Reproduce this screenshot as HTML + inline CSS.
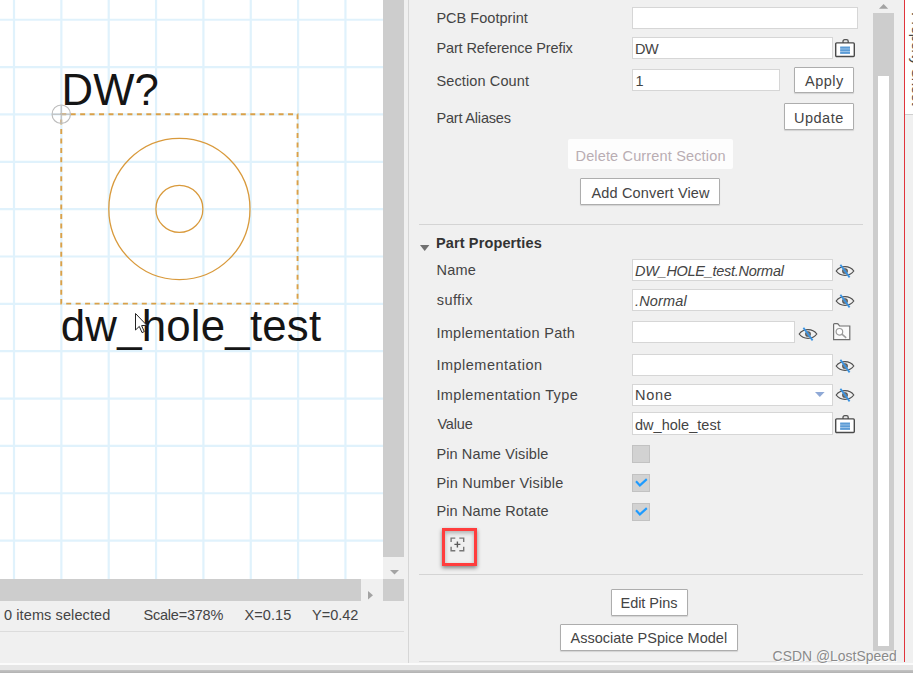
<!DOCTYPE html>
<html><head><meta charset="utf-8"><title>Part Properties</title>
<style>
html,body{margin:0;padding:0;}
body{width:913px;height:673px;overflow:hidden;background:#f0f0f0;position:relative;font-family:"Liberation Sans",Arial,sans-serif;font-size:14.5px;color:#444;}
.abs{position:absolute;}
.t{position:absolute;white-space:nowrap;line-height:20px;font-size:14.5px;color:#444;}
.inp{position:absolute;background:#fff;border:1px solid #d6d6d6;box-sizing:border-box;}
.btn{position:absolute;background:#fff;border:1px solid #adadad;box-sizing:border-box;border-radius:1px;box-shadow:0 1px 1px rgba(0,0,0,.12);}
.cb{position:absolute;background:#d2d2d2;border:1px solid #c2c2c2;box-sizing:border-box;width:18.5px;height:18.5px;}
.hl{position:absolute;height:1px;background:#d4d4d4;}
svg{position:absolute;overflow:visible;}
</style></head><body>
<svg width="0" height="0" style="position:absolute"><symbol id="eye" viewBox="0 0 20 14" overflow="visible">
<path d="M1.2 7 C4 3.2 7.6 2.7 10 2.7 C12.4 2.7 16 3.2 18.8 7 C16 10.8 12.4 11.3 10 11.3 C7.6 11.3 4 10.8 1.2 7 Z" fill="none" stroke="#505050" stroke-width="1.2"/>
<circle cx="10" cy="7" r="2.3" fill="#8a8a8a" stroke="#505050" stroke-width="1.1"/>
<line x1="5.4" y1="0.8" x2="14.6" y2="13.4" stroke="#3a92e0" stroke-width="1.8"/>
</symbol><symbol id="clipb" viewBox="0 0 20 19" overflow="visible">
<rect x="8" y="0.7" width="5.2" height="4.4" rx="1.6" fill="#e8e8e8" stroke="#555" stroke-width="1.3"/>
<rect x="0.7" y="3.9" width="18.6" height="13.6" rx="1" fill="#fff" stroke="#4a4a4a" stroke-width="1.4"/>
<rect x="5.2" y="7.4" width="9.8" height="7.6" fill="#b4d2ee"/>
<rect x="5.2" y="7.7" width="9.8" height="1.9" fill="#5b9bd5"/>
<rect x="5.2" y="10.3" width="9.8" height="1.9" fill="#5b9bd5"/>
<rect x="5.2" y="12.9" width="9.8" height="1.9" fill="#5b9bd5"/>
</symbol></svg>

<!-- canvas -->
<div class="abs" style="left:0;top:0;width:383px;height:579px;background:#fff;overflow:hidden;">
<svg width="383" height="579" viewBox="0 0 383 579" style="left:0;top:0;">
<g stroke="#e0f2fc" stroke-width="2.2">
<line x1="14.00" y1="0" x2="14.00" y2="579"/>
<line x1="61.35" y1="0" x2="61.35" y2="579"/>
<line x1="108.70" y1="0" x2="108.70" y2="579"/>
<line x1="156.05" y1="0" x2="156.05" y2="579"/>
<line x1="203.40" y1="0" x2="203.40" y2="579"/>
<line x1="250.75" y1="0" x2="250.75" y2="579"/>
<line x1="298.10" y1="0" x2="298.10" y2="579"/>
<line x1="345.45" y1="0" x2="345.45" y2="579"/>
<line x1="0" y1="19.75" x2="383" y2="19.75"/>
<line x1="0" y1="67.10" x2="383" y2="67.10"/>
<line x1="0" y1="114.45" x2="383" y2="114.45"/>
<line x1="0" y1="161.80" x2="383" y2="161.80"/>
<line x1="0" y1="209.15" x2="383" y2="209.15"/>
<line x1="0" y1="256.50" x2="383" y2="256.50"/>
<line x1="0" y1="303.85" x2="383" y2="303.85"/>
<line x1="0" y1="351.20" x2="383" y2="351.20"/>
<line x1="0" y1="398.55" x2="383" y2="398.55"/>
<line x1="0" y1="445.90" x2="383" y2="445.90"/>
<line x1="0" y1="493.25" x2="383" y2="493.25"/>
<line x1="0" y1="540.60" x2="383" y2="540.60"/>
</g>
<g fill="none" stroke="#d99a3c" stroke-width="1.3">
<rect x="61.25" y="114.20" width="236.30" height="189.40" stroke-dasharray="5 4.45" stroke="#dba148" stroke-width="1.9"/>
<circle cx="179.40" cy="208.95" r="70.6"/>
<circle cx="179.40" cy="208.95" r="23.5"/>
</g>
<g fill="none" stroke="#bdbdbd" stroke-width="1.2">
<circle cx="61.25" cy="114.20" r="9.2"/>
<line x1="52.25" y1="114.20" x2="70.25" y2="114.20"/>
<line x1="61.25" y1="105.20" x2="61.25" y2="123.20"/>
</g>
<text id="c1" x="61.6" y="104.6" font-family="Liberation Sans, Arial, sans-serif" font-size="43.7" fill="#151515">DW?</text>
<text id="c2" x="60.8" y="340.8" font-family="Liberation Sans, Arial, sans-serif" font-size="43.8" letter-spacing="0.2" fill="#151515">dw_hole_test</text>
<!-- mouse cursor -->
<path d="M135.5 313.5 L135.5 330 L139.3 326.4 L142 332.6 L144.3 331.6 L141.6 325.6 L146.8 325.3 Z" fill="#fff" stroke="#222" stroke-width="1" stroke-linejoin="round"/>
</svg>
</div>

<!-- vertical scrollbar of canvas -->
<div class="abs" style="left:383px;top:0;width:21px;height:557px;background:#cdcdcd;"></div>
<svg width="10" height="6" style="left:389.5px;top:570px;"><path d="M0 0 L9 0 L4.5 4.6 Z" fill="#a3a3a3"/></svg>
<!-- horizontal scrollbar -->
<div class="abs" style="left:0;top:579px;width:361.3px;height:21.5px;background:#cdcdcd;"></div>
<div class="abs" style="left:383px;top:579px;width:21px;height:21.5px;background:#cdcdcd;"></div>
<svg width="6" height="10" style="left:367.8px;top:591.3px;"><path d="M0 0 L5 4.2 L0 8.4 Z" fill="#a3a3a3"/></svg>
<!-- status bar -->
<div class="hl" style="left:0;top:631px;width:404px;background:#dcdcdc;"></div>

<!-- divider -->
<div class="abs" style="left:408px;top:0;width:1px;height:663px;background:#d6d6d6;"></div>

<!-- right panel: inputs -->
<div class="inp" style="left:631.5px;top:6.5px;width:226px;height:22px;"></div>
<div class="inp" style="left:631.5px;top:36.5px;width:201px;height:22px;"></div>
<div class="inp" style="left:631.5px;top:69px;width:148.5px;height:22px;"></div>
<div class="inp" style="left:631.5px;top:259.2px;width:201px;height:22px;"></div>
<div class="inp" style="left:631.5px;top:289px;width:201px;height:22px;"></div>
<div class="inp" style="left:631.5px;top:321.2px;width:163.5px;height:22px;"></div>
<div class="inp" style="left:631.5px;top:354.2px;width:201px;height:22px;"></div>
<div class="inp" style="left:631.5px;top:383.5px;width:201px;height:22px;"></div>
<div class="inp" style="left:631.5px;top:412.3px;width:201px;height:22.5px;"></div>
<svg width="10" height="6" style="left:815px;top:391.7px;"><path d="M0 0 L9.6 0 L4.8 5 Z" fill="#8fa9d6"/></svg>

<!-- buttons -->
<div class="btn" style="left:794.2px;top:66.7px;width:59.6px;height:26.8px;"></div>
<div class="btn" style="left:784.4px;top:103.2px;width:69.4px;height:26.8px;"></div>
<div class="abs" style="left:568px;top:138.8px;width:164.5px;height:30px;background:#fdfdfd;border-radius:2px;"></div>
<div class="btn" style="left:580.4px;top:177.9px;width:139.8px;height:26.8px;"></div>
<div class="btn" style="left:610.6px;top:589.2px;width:77.6px;height:26.5px;"></div>
<div class="btn" style="left:560.4px;top:624.2px;width:177.8px;height:26.5px;"></div>

<!-- separators -->
<div class="hl" style="left:419px;top:224px;width:444px;"></div>
<div class="hl" style="left:419px;top:574px;width:444px;"></div>
<div class="hl" style="left:419px;top:661.3px;width:444px;background:#dcdcdc;"></div>

<!-- section arrow -->
<svg width="11" height="8" style="left:420.2px;top:245.3px;"><path d="M0 0 L9.4 0 L4.7 6 Z" fill="#707070"/></svg>

<!-- icons -->
<svg width="20" height="19" style="left:835.2px;top:38.6px;"><use href="#clipb"/></svg>
<svg width="20" height="19" style="left:835.2px;top:414.6px;"><use href="#clipb"/></svg>
<svg width="20" height="14" style="left:835.2px;top:264.2px;"><use href="#eye"/></svg>
<svg width="20" height="14" style="left:835.2px;top:294.2px;"><use href="#eye"/></svg>
<svg width="20" height="14" style="left:798.2px;top:326.7px;"><use href="#eye"/></svg>
<svg width="20" height="14" style="left:835.2px;top:359.2px;"><use href="#eye"/></svg>
<svg width="20" height="14" style="left:835.2px;top:387.7px;"><use href="#eye"/></svg>
<!-- folder/search icon -->
<svg width="18" height="18" style="left:833px;top:323.4px;" viewBox="0 0 18 18">
<path d="M0.6 1.6 Q0.6 0.6 1.6 0.6 L4 0.6 Q5 0.6 5.6 1.6 L6.6 3 L16.8 3 L16.8 16.6 L0.6 16.6 Z" fill="#fafafa" stroke="#6e6e6e" stroke-width="1.2"/>
<circle cx="6.4" cy="8.8" r="3.3" fill="#fff" stroke="#9a9a9a" stroke-width="1.2"/>
<line x1="8.9" y1="11.2" x2="13.2" y2="14.8" stroke="#9a9a9a" stroke-width="1.5"/>
</svg>

<!-- checkboxes -->
<div class="cb" style="left:631.7px;top:444.8px;"></div>
<div class="cb" style="left:631.7px;top:473.8px;"></div>
<div class="cb" style="left:631.7px;top:502.5px;"></div>
<svg width="14" height="10" style="left:634.6px;top:478.4px;"><path d="M1 3.2 L4.9 7.4 L11.8 1.1" fill="none" stroke="#1e9bff" stroke-width="2.1"/></svg>
<svg width="14" height="10" style="left:634.6px;top:507.1px;"><path d="M1 3.2 L4.9 7.4 L11.8 1.1" fill="none" stroke="#1e9bff" stroke-width="2.1"/></svg>

<!-- red highlighted box -->
<div class="abs" style="left:442.1px;top:527.9px;width:34.9px;height:37.9px;box-sizing:border-box;border:3px solid #ff3d3d;box-shadow:0 2px 4px rgba(0,0,0,.45), inset 0 2px 4px rgba(0,0,0,.28);"></div>
<svg width="16" height="16" style="left:449.5px;top:536.8px;" viewBox="0 0 16 16">
<path d="M1.1 5 V1.1 H5.3 M9.3 1.1 H13.7 V5 M13.7 9.8 V13.7 H9.3 M5.3 13.7 H1.1 V9.8" fill="none" stroke="#777" stroke-width="1.4"/><path d="M4.4 7.4 H10.4 M7.4 4.4 V10.4" fill="none" stroke="#5a5a5a" stroke-width="1.4"/>
</svg>

<!-- panel scrollbar -->
<div class="abs" style="left:873px;top:12.6px;width:21px;height:638px;background:#cdcdcd;"></div>
<div class="abs" style="left:877.6px;top:76px;width:11.5px;height:570.2px;background:#fff;"></div>
<svg width="10" height="6" style="left:879.3px;top:4px;"><path d="M0 4.8 L4.6 0 L9.2 4.8 Z" fill="#a3a3a3"/></svg>

<!-- right edge: red line + vertical tab -->
<div class="abs" style="left:905px;top:0;width:8px;height:113.5px;background:#fff;border-bottom:1px solid #cfcfcf;"></div>
<div class="abs" style="left:904px;top:0;width:1.2px;height:662px;background:#e0343c;"></div>
<div class="abs" id="vt" style="left:909.3px;top:11.5px;letter-spacing:-0.5px;writing-mode:vertical-rl;font-size:15px;line-height:16px;color:#444;white-space:nowrap;">Property Sheet</div>

<!-- bottom strips -->
<div class="abs" style="left:0;top:662.5px;width:913px;height:2.5px;background:#fbfbfb;"></div>
<div class="abs" style="left:0;top:665px;width:913px;height:5.5px;background:#e6e6e6;"></div>
<div class="abs" style="left:0;top:670px;width:913px;height:3px;background:linear-gradient(#c4c4c4,#b2b2b2);"></div>

<!-- text -->
<span class="t" id="l1" style="left:436.40px;top:7.50px;letter-spacing:0.025px;">PCB Footprint</span>
<span class="t" id="l2" style="left:436.40px;top:37.50px;letter-spacing:-0.110px;">Part Reference Prefix</span>
<span class="t" id="l3" style="left:436.40px;top:71.25px;letter-spacing:0.129px;">Section Count</span>
<span class="t" id="l4" style="left:436.40px;top:107.50px;letter-spacing:-0.177px;">Part Aliases</span>
<span class="t" id="l5" style="left:436.00px;top:233.00px;letter-spacing:0.125px;font-weight:bold;color:#333;">Part Properties</span>
<span class="t" id="l6" style="left:436.40px;top:260.00px;letter-spacing:0.267px;">Name</span>
<span class="t" id="l7" style="left:436.80px;top:290.00px;letter-spacing:0.400px;">suffix</span>
<span class="t" id="l8" style="left:436.40px;top:322.50px;letter-spacing:0.308px;">Implementation Path</span>
<span class="t" id="l9" style="left:436.40px;top:355.00px;letter-spacing:0.504px;">Implementation</span>
<span class="t" id="l10" style="left:436.40px;top:385.00px;letter-spacing:0.392px;">Implementation Type</span>
<span class="t" id="l11" style="left:437.40px;top:413.75px;letter-spacing:-0.175px;">Value</span>
<span class="t" id="l12" style="left:436.40px;top:443.75px;letter-spacing:0.120px;">Pin Name Visible</span>
<span class="t" id="l13" style="left:436.40px;top:472.50px;letter-spacing:0.224px;">Pin Number Visible</span>
<span class="t" id="l14" style="left:436.40px;top:501.25px;letter-spacing:0.129px;">Pin Name Rotate</span>
<span class="t" id="v1" style="left:635.00px;top:38.75px;letter-spacing:-0.500px;">DW</span>
<span class="t" id="v2" style="left:635.50px;top:71.25px;letter-spacing:0.000px;">1</span>
<span class="t" id="v3" style="left:635.00px;top:261.25px;letter-spacing:-0.278px;font-style:italic;">DW_HOLE_test.Normal</span>
<span class="t" id="v4" style="left:635.00px;top:290.50px;letter-spacing:0.167px;font-style:italic;">.Normal</span>
<span class="t" id="v5" style="left:635.00px;top:384.50px;letter-spacing:0.750px;">None</span>
<span class="t" id="v6" style="left:635.00px;top:415.00px;letter-spacing:0.023px;">dw_hole_test</span>
<span class="t" id="b1" style="left:805.00px;top:71.00px;letter-spacing:0.500px;">Apply</span>
<span class="t" id="b2" style="left:794.00px;top:107.50px;letter-spacing:0.500px;">Update</span>
<span class="t" id="b3" style="left:575.50px;top:146.25px;letter-spacing:0.155px;color:#b9adb3;">Delete Current Section</span>
<span class="t" id="b4" style="left:591.50px;top:182.50px;letter-spacing:0.150px;">Add Convert View</span>
<span class="t" id="b5" style="left:620.50px;top:593.00px;letter-spacing:-0.031px;">Edit Pins</span>
<span class="t" id="b6" style="left:570.50px;top:628.00px;letter-spacing:0.012px;">Associate PSpice Model</span>
<span class="t" id="s1" style="left:4.00px;top:605.00px;letter-spacing:0.100px;">0 items selected</span>
<span class="t" id="s2" style="left:143.50px;top:605.00px;letter-spacing:-0.222px;">Scale=378%</span>
<span class="t" id="s3" style="left:244.50px;top:604.50px;letter-spacing:0.090px;">X=0.15</span>
<span class="t" id="s4" style="left:312.00px;top:604.50px;letter-spacing:0.000px;">Y=0.42</span>

<!-- watermark -->
<span class="abs" id="wm" style="left:772.6px;top:647.1px;font-size:13.95px;line-height:18px;color:#8a8a8a;white-space:nowrap;text-shadow:1px 1px 0 rgba(255,255,255,.9);">CSDN @LostSpeed</span>
</body></html>
